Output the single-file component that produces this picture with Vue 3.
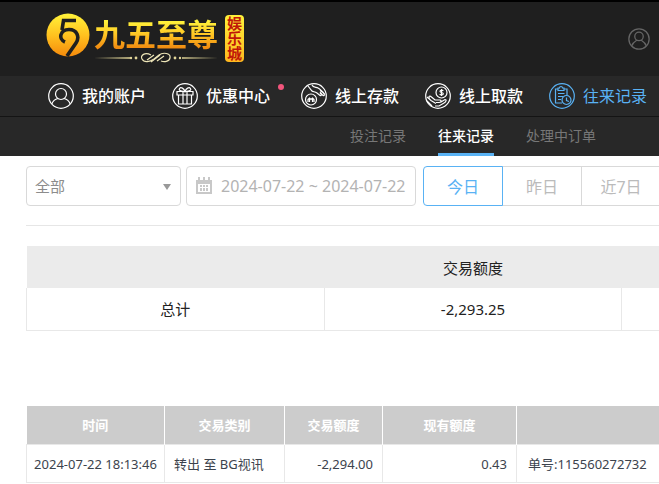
<template>
  <div class="page">
    <header class="header">
      <a class="logo" href="#" aria-label="九五至尊娱乐城">
        <svg class="logo__mark" viewBox="0 0 44 44" aria-hidden="true">
          <defs>
            <linearGradient id="gold" x1="0" y1="0" x2="0" y2="1">
              <stop offset="0" stop-color="#fff33a" />
              <stop offset="0.5" stop-color="#ffc21f" />
              <stop offset="1" stop-color="#f58a0c" />
            </linearGradient>
          </defs>
          <circle cx="22" cy="22" r="21.5" fill="url(#gold)" />
          <g fill="none" stroke="#1f1f1f" stroke-width="3.6">
            <path d="M30 7.500H17.500L16 17" />
            <path d="M19 29C12 26 14 16.500 23 16.500C31 16.500 34 24 30 30L21 43" />
          </g>
        </svg>
        <span class="logo__words">
          <span class="logo__name">九五至尊</span>
          <svg class="logo__flourish" viewBox="0 0 124 12" aria-hidden="true">
            <path d="M0 6L36 5.200V6.800ZM124 6L88 5.200V6.800Z" fill="#e3d79a" />
            <g fill="#e3d79a">
              <circle cx="37" cy="6" r="1.200" />
              <circle cx="42" cy="6" r="1.400" />
              <circle cx="81" cy="6" r="1.400" />
              <circle cx="86" cy="6" r="1.200" />
            </g>
            <g fill="none" stroke="#eee6b8" stroke-width="1.200">
              <path d="M57 3C51 0 46 3 48 7C50 11 56 10 60 7L65 3C69 0 77 1 76 6C75 10 70 10 67 9" />
              <path d="M53 8L60 3M57 10L66 3M63 9L70 4" />
            </g>
          </svg>
        </span>
        <span class="logo__tag">娱乐城</span>
      </a>
      <a class="account" href="#" aria-label="账户">
        <svg viewBox="0 0 26 26" aria-hidden="true">
          <circle cx="13" cy="13" r="12" />
          <circle cx="13" cy="10" r="5" />
          <path d="M4.500 21C6 17 9 15.500 10.500 14.500M21.500 21C20 17 17 15.500 15.500 14.500" />
        </svg>
      </a>
    </header>

    <nav class="nav">
      <a
        v-for="item in menu"
        :key="item.label"
        href="#"
        :class="['nav__item', { 'nav__item--active': item.active, 'nav__item--badge': item.badge }]"
      >
        <svg class="nav__icon" viewBox="0 0 26 26" aria-hidden="true">
          <circle cx="13" cy="13" r="12.300" />
          <path v-for="d in item.paths" :key="d" :d="d" />
        </svg>
        <span>{{ item.label }}</span>
      </a>
    </nav>

    <nav class="subnav">
      <a
        v-for="tab in tabs"
        :key="tab"
        href="#"
        :class="['subnav__item', { 'subnav__item--active': tab === activeTab }]"
        @click.prevent="activeTab = tab"
      >{{ tab }}</a>
    </nav>

    <main class="content">
      <form class="filters" @submit.prevent>
        <div class="select">
          <select v-model="type" aria-label="交易类别">
            <option>全部</option>
          </select>
        </div>
        <label class="date">
          <svg viewBox="0 0 18 18" aria-hidden="true">
            <path
              fill="#c8c8c8"
              fill-rule="evenodd"
              d="M1 3H3V0H5V3H8V0H10V3H13V0H15V3H17V17H1ZM3 7V15H15V7Z"
            />
            <path fill="#c8c8c8" d="M5 8H7V10H5ZM8 8H10V10H8ZM11 8H13V10H11ZM5 11H7V14H5ZM8 11H10V14H8ZM11 11H13V14H11Z" />
          </svg>
          <input v-model="range" type="text" aria-label="日期" />
        </label>
        <div class="days">
          <button
            v-for="day in days"
            :key="day"
            type="button"
            :class="['days__item', { 'days__item--active': day === activeDay }]"
            @click="activeDay = day"
          >{{ day }}</button>
        </div>
      </form>

      <table class="summary">
        <thead>
          <tr>
            <th></th>
            <th>交易额度</th>
            <th></th>
          </tr>
        </thead>
        <tbody>
          <tr>
            <td>总计</td>
            <td>-2,293.25</td>
            <td></td>
          </tr>
        </tbody>
      </table>

      <table class="records">
        <colgroup>
          <col class="records__time" />
          <col class="records__type" />
          <col class="records__amount" />
          <col class="records__balance" />
          <col />
        </colgroup>
        <thead>
          <tr>
            <th>时间</th>
            <th>交易类别</th>
            <th>交易额度</th>
            <th>现有额度</th>
            <th></th>
          </tr>
        </thead>
        <tbody>
          <tr v-for="row in rows" :key="row.note">
            <td class="center">{{ row.time }}</td>
            <td>{{ row.type }}</td>
            <td class="number">{{ row.amount }}</td>
            <td class="number">{{ row.balance }}</td>
            <td class="note">{{ row.note }}</td>
          </tr>
        </tbody>
      </table>
    </main>
  </div>
</template>

<script setup>
import { ref } from 'vue'

const menu = [
  {
    label: '我的账户',
    paths: [
      'M13 5.500A5.500 5.500 0 1 1 13 16.500A5.500 5.500 0 1 1 13 5.500',
      'M3.800 21C5 17.500 7.500 16 10 15.500M22.200 21C21 17.500 18.500 16 16 15.500'
    ]
  },
  {
    label: '优惠中心',
    badge: true,
    paths: [
      'M5 8.500H21V12H5ZM6.500 12V21H19.500V12',
      'M11 8.500V21M15 8.500V21',
      'M12.500 8.500C8 8.500 6.500 7 7.500 5.500C9 3.500 12 5.500 13 8.500C14 5.500 17 3.500 18.500 5.500C19.500 7 18 8.500 13.500 8.500'
    ]
  },
  {
    label: '线上存款',
    paths: [
      'M10 11A5.500 5.500 0 1 1 10 22A5.500 5.500 0 1 1 10 11',
      'M7 19V16.500L8.500 15L10 16.500L11.500 15L13 16.500V19M8.500 15V19M11.500 15V19',
      'M7 3L11 8C12 9 14 8.500 16 10L19 12.500C21 13 20.500 11 19 9.500',
      'M11 2C12 4.500 15 4 17 5C20 6.500 22 9 24 11.500M19 9.500L22 12.500C24 13 23.500 11 22 9.500L19 7.500'
    ]
  },
  {
    label: '线上取款',
    paths: [
      'M16.500 4A5.500 5.500 0 1 1 16.500 15A5.500 5.500 0 1 1 16.500 4',
      'M18.300 8C17.500 6.800 14.800 7 15 8.500C15.300 10 18.300 9 18.300 10.700C18.300 12.300 15.500 12.300 14.700 11M16.500 6V13',
      'M2 14L6 17.500L11 20.500M2 18L7 23',
      'M4.500 15.500C3 13 5 12.500 6.500 14L10 17L15 17C17 17.500 16 19.500 14 19.500H11M16 19L20 16.500C22 16.500 21 19 19 20L14 23H10'
    ]
  },
  {
    label: '往来记录',
    active: true,
    paths: [
      'M9 6H6.500V20H13M15 6H18V12',
      'M9 7.500V5H10.500C10.500 3 13.500 3 13.500 5H15V7.500Z',
      'M9 10.500H15.500M9 13.500H14M9 16.500H12',
      'M17.500 12.500A4.500 4.500 0 1 1 17.500 21.500A4.500 4.500 0 1 1 17.500 12.500',
      'M17.500 14.500V17.500L20 18.500'
    ]
  }
]

const tabs = ['投注记录', '往来记录', '处理中订单']
const activeTab = ref('往来记录')

const type = ref('全部')
const range = ref('2024-07-22 ~ 2024-07-22')
const days = ['今日', '昨日', '近7日']
const activeDay = ref('今日')

const rows = [
  {
    time: '2024-07-22 18:13:46',
    type: '转出 至 BG视讯',
    amount: '-2,294.00',
    balance: '0.43',
    note: '单号:115560272732'
  }
]
</script>

<style>
body {
  margin: 0;
  background: #fff;
  overflow-x: hidden;
}
</style>

<style scoped>
.page {
  overflow: hidden;
  font-family: 'Noto Sans', 'Noto Sans CJK SC', sans-serif;
}

.page * {
  box-sizing: border-box;
}

a {
  text-decoration: none;
}

.header {
  display: flex;
  align-items: center;
  justify-content: space-between;
  height: 76px;
  padding: 0 9px 0 46px;
  border-top: 2px solid #000;
  background: #1f1f1f;
}

.logo {
  display: flex;
  align-items: center;
}

.logo__mark {
  width: 44px;
  height: 44px;
  margin-bottom: 8px;
}

.logo__words {
  display: flex;
  flex-direction: column;
  margin-left: 4px;
}

.logo__name {
  font-family: 'Noto Sans CJK SC', sans-serif;
  font-size: 31px;
  font-weight: 700;
  line-height: 38px;
  color: transparent;
  background: linear-gradient(#fff23a 20%, #ffc424 55%, #f08a10 90%);
  background-clip: text;
  -webkit-background-clip: text;
}

.logo__flourish {
  width: 124px;
  height: 12px;
}

.logo__tag {
  width: 19px;
  margin-left: 7px;
  margin-bottom: 2px;
  padding: 1px 2px;
  border-radius: 4px;
  background: linear-gradient(#fff13a, #ffb81f);
  color: #c01808;
  font-size: 15px;
  font-weight: 700;
  line-height: 15px;
  text-align: center;
}

.account {
  width: 22px;
  height: 22px;
}

.account svg {
  display: block;
  fill: none;
  stroke: #666;
  stroke-width: 1.5;
}

.nav {
  display: flex;
  align-items: center;
  gap: 26px;
  height: 41px;
  padding-left: 48px;
  border-bottom: 1px solid #141414;
  background: #282828;
}

.nav__item {
  position: relative;
  display: flex;
  flex-shrink: 0;
  align-items: center;
  gap: 8px;
  color: #fff;
  font-size: 16px;
  font-weight: 500;
  line-height: 24px;
}

.nav__item--active {
  color: #59b2f4;
  font-weight: 400;
}

.nav__item--badge {
  padding-right: 5px;
}

.nav__item--badge::after {
  content: '';
  position: absolute;
  top: 1px;
  right: -9px;
  width: 6px;
  height: 6px;
  border-radius: 50%;
  background: #f2557c;
}

.nav__icon {
  width: 26px;
  height: 26px;
  fill: none;
  stroke: currentColor;
  stroke-width: 1.2;
}

.subnav {
  display: flex;
  gap: 32px;
  height: 39px;
  padding-left: 350px;
  background: #282828;
}

.subnav__item {
  flex-shrink: 0;
  border-bottom: 3px solid transparent;
  color: #777;
  font-size: 14px;
  line-height: 38px;
}

.subnav__item--active {
  border-color: #59b2f4;
  color: #fff;
  font-weight: 500;
}

/* The page body is wider than a narrow window and runs off its right edge */
.content {
  min-width: 920px;
  padding: 10px 0 0 26px;
}

.filters {
  display: flex;
  padding-bottom: 19px;
  border-bottom: 1px solid #e6e6e6;
}

.select {
  position: relative;
  width: 155px;
  height: 40px;
}

.select::after {
  content: '';
  position: absolute;
  top: 18px;
  right: 10px;
  border: 4px solid transparent;
  border-top: 6px solid #999;
  border-bottom: 0;
  pointer-events: none;
}

.select select {
  width: 100%;
  height: 100%;
  padding: 0 8px;
  border: 1px solid #d9d9d9;
  border-radius: 4px;
  background: #fff;
  color: #8c8c8c;
  font: inherit;
  font-size: 15px;
  appearance: none;
}

.date {
  display: flex;
  align-items: center;
  gap: 8px;
  width: 230px;
  height: 40px;
  margin-left: 5px;
  padding: 0 4px 0 8px;
  border: 1px solid #d9d9d9;
  border-radius: 4px;
}

.date svg {
  flex-shrink: 0;
  width: 18px;
  height: 18px;
}

.date input {
  width: 100%;
  min-width: 0;
  padding: 0;
  border: 0;
  outline: 0;
  background: none;
  color: #b3b3b3;
  font: inherit;
  font-size: 16px;
}

.days {
  display: flex;
  margin-left: 7px;
}

.days__item {
  width: 80px;
  height: 40px;
  margin-right: -1px;
  padding: 0;
  border: 1px solid #d9d9d9;
  background: #fff;
  color: #bbb;
  font: inherit;
  font-size: 16px;
}

.days__item:first-child {
  border-radius: 4px 0 0 4px;
}

.days__item--active {
  position: relative;
  border-color: #59b2f4;
  color: #59b2f4;
}

table {
  width: 100%;
  border-collapse: collapse;
  table-layout: fixed;
}

.summary {
  margin-top: 20px;
  color: #222;
  font-size: 15px;
}

.summary th,
.summary td {
  height: 42px;
  padding: 0;
  font-weight: 400;
  text-align: center;
}

.summary th {
  background: #ebebeb;
}

.summary td {
  border: 1px solid #e8e8e8;
  border-top: 0;
}

.records {
  margin-top: 75px;
  color: #3c434d;
  font-size: 13px;
}

.records__time {
  width: 138px;
}

.records__type {
  width: 120px;
}

.records__amount {
  width: 98px;
}

.records__balance {
  width: 134px;
}

.records th {
  height: 39px;
  padding: 0;
  border-right: 1px solid #fff;
  background: #ccc;
  color: #fff;
  font-weight: 700;
}

.records td {
  height: 38px;
  padding: 0 9px;
  border: 1px solid #e8e8e8;
  white-space: nowrap;
}

.records .center {
  padding: 0;
  text-align: center;
}

.records .number {
  text-align: right;
}

.records .note {
  padding-left: 11px;
}
</style>
